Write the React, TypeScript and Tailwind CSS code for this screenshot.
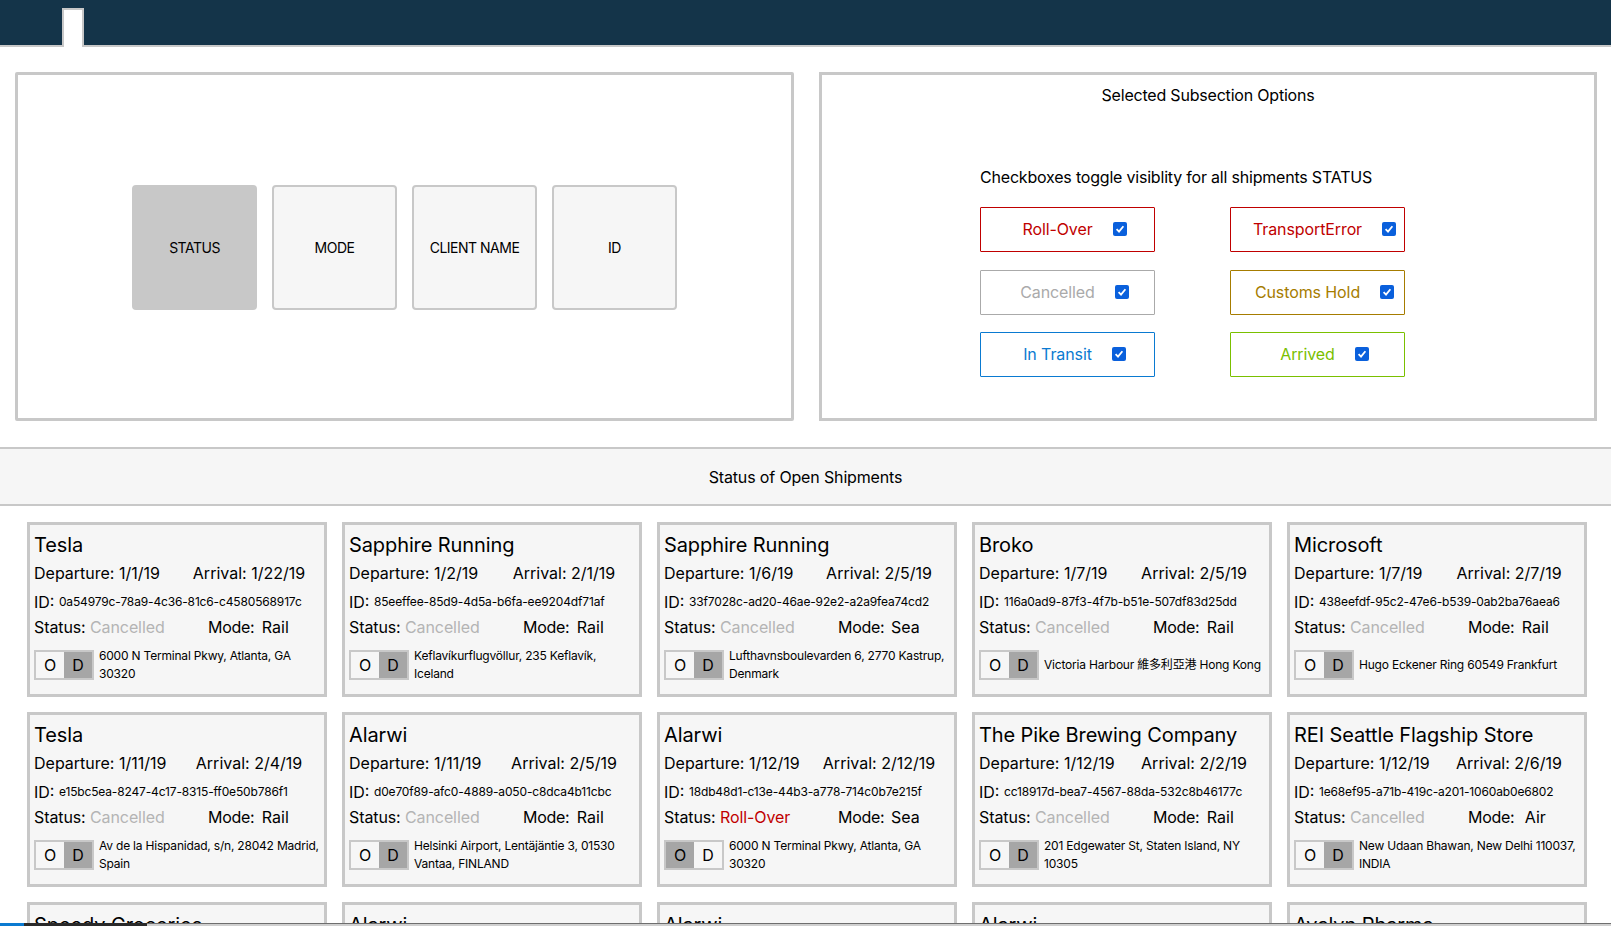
const shipments = [
  { name: "Tesla", dep: "1/1/19", arr: "1/22/19", id: "0a54979c-78a9-4c36-81c6-c4580568917c", status: "Cancelled", mode: "Rail", active: "D", addr: "6000 N Terminal Pkwy, Atlanta, GA 30320" },
  { name: "Sapphire Running", dep: "1/2/19", arr: "2/1/19", id: "85eeffee-85d9-4d5a-b6fa-ee9204df71af", status: "Cancelled", mode: "Rail", active: "D", addr: "Keflavíkurflugvöllur, 235 Keflavík, Iceland" },
  { name: "Sapphire Running", dep: "1/6/19", arr: "2/5/19", id: "33f7028c-ad20-46ae-92e2-a2a9fea74cd2", status: "Cancelled", mode: "Sea", active: "D", addr: "Lufthavnsboulevarden 6, 2770 Kastrup, Denmark" },
  { name: "Broko", dep: "1/7/19", arr: "2/5/19", id: "116a0ad9-87f3-4f7b-b51e-507df83d25dd", status: "Cancelled", mode: "Rail", active: "D", addr: "Victoria Harbour 維多利亞港 Hong Kong" },
  { name: "Microsoft", dep: "1/7/19", arr: "2/7/19", id: "438eefdf-95c2-47e6-b539-0ab2ba76aea6", status: "Cancelled", mode: "Rail", active: "D", addr: "Hugo Eckener Ring 60549 Frankfurt" },
  { name: "Tesla", dep: "1/11/19", arr: "2/4/19", id: "e15bc5ea-8247-4c17-8315-ff0e50b786f1", status: "Cancelled", mode: "Rail", active: "D", addr: "Av de la Hispanidad, s/n, 28042 Madrid, Spain" },
  { name: "Alarwi", dep: "1/11/19", arr: "2/5/19", id: "d0e70f89-afc0-4889-a050-c8dca4b11cbc", status: "Cancelled", mode: "Rail", active: "D", addr: "Helsinki Airport, Lentäjäntie 3, 01530 Vantaa, FINLAND" },
  { name: "Alarwi", dep: "1/12/19", arr: "2/12/19", id: "18db48d1-c13e-44b3-a778-714c0b7e215f", status: "Roll-Over", mode: "Sea", active: "O", addr: "6000 N Terminal Pkwy, Atlanta, GA 30320" },
  { name: "The Pike Brewing Company", dep: "1/12/19", arr: "2/2/19", id: "cc18917d-bea7-4567-88da-532c8b46177c", status: "Cancelled", mode: "Rail", active: "D", addr: "201 Edgewater St, Staten Island, NY 10305" },
  { name: "REI Seattle Flagship Store", dep: "1/12/19", arr: "2/6/19", id: "1e68ef95-a71b-419c-a201-1060ab0e6802", status: "Cancelled", mode: "Air", active: "D", addr: "New Udaan Bhawan, New Delhi 110037, INDIA" },
  { name: "Speedy Groceries", dep: "", arr: "", id: "", status: "Cancelled", mode: "Rail", active: "D", addr: "" },
  { name: "Alarwi", dep: "", arr: "", id: "", status: "Cancelled", mode: "Rail", active: "D", addr: "" },
  { name: "Alarwi", dep: "", arr: "", id: "", status: "Cancelled", mode: "Rail", active: "D", addr: "" },
  { name: "Alarwi", dep: "", arr: "", id: "", status: "Cancelled", mode: "Rail", active: "D", addr: "" },
  { name: "Avalyn Pharma", dep: "", arr: "", id: "", status: "Cancelled", mode: "Rail", active: "D", addr: "" },
]

const filters = [
  { label: "Roll-Over", cls: "border-[#c00000] text-[#c00000]" },
  { label: "TransportError", cls: "border-[#c00000] text-[#c00000]" },
  { label: "Cancelled", cls: "border-[#aaaaaa] text-[#aaaaaa]" },
  { label: "Customs Hold", cls: "border-[#a67c00] text-[#a67c00]" },
  { label: "In Transit", cls: "border-[#0a7ad1] text-[#0a7ad1]" },
  { label: "Arrived", cls: "border-[#7ac000] text-[#7ac000]" },
]

const Check = () => (
  <span className="absolute left-full top-1/2 ml-[20px] flex h-[14px] w-[14px] -translate-y-1/2 items-center justify-center rounded-[2px] bg-[#0a60dc]">
    <svg width="10" height="10" viewBox="0 0 10 10" fill="none">
      <path d="M1.6 5.2 L4 7.6 L8.4 2.2" stroke="#fff" strokeWidth="1.8" />
    </svg>
  </span>
)

const ShipmentCard = ({ s }: { s: (typeof shipments)[number] }) => (
  <div className="h-[175px] border-[3px] border-[#c8c8c8] bg-[#f6f6f6] px-[4px] pt-[6px] text-black">
    <div className="truncate text-[20px] leading-[28px] tracking-[-0.1px]">{s.name}</div>
    <div className="mt-[2px] flex text-[16px] leading-[24px]">
      <span className="w-[145px] shrink-0">Departure: {s.dep}</span>
      <span className="flex w-[140px] justify-center">Arrival: {s.arr}</span>
    </div>
    <div className="mt-[5px] flex items-center text-[16px] leading-[24px]">
      ID:&nbsp;<span className="text-[12px] tracking-[-0.15px]">{s.id}</span>
    </div>
    <div className="mt-[1px] flex text-[16px] leading-[24px]">
      <span className="w-[174px] shrink-0 tracking-[-0.1px]">
        Status: <span className={s.status === "Roll-Over" ? "text-[#c00000]" : "text-[#b4b4b4]"}>{s.status}</span>
      </span>
      <span className="tracking-[-0.3px]">Mode:</span>
      <span className="ml-[5px] w-[32px] text-center">{s.mode}</span>
    </div>
    <div className="mt-[8px] flex min-h-[36px] items-center">
      <div className="flex h-[30px] w-[60px] shrink-0 border-[2px] border-[#c8c8c8] text-[16px]">
        <span className={`flex flex-1 items-center justify-center ${s.active === "O" ? "bg-[#a6a6a6]" : ""}`}>O</span>
        <span className={`flex flex-1 items-center justify-center ${s.active === "D" ? "bg-[#a6a6a6]" : ""}`}>D</span>
      </div>
      <div className="ml-[5px] text-[12px] leading-[18px] tracking-[-0.2px]">{s.addr}</div>
    </div>
  </div>
)

export default function App() {
  return (
    <div className="relative h-[926px] overflow-hidden bg-white font-['Inter','Noto_Sans_CJK_TC',sans-serif] text-black">
      <div className="relative h-[47px] border-b-[2px] border-[#c8c8c8] bg-[#143449]">
        <div className="absolute left-[62px] top-[8px] h-[39px] w-[22px] border-x-[2px] border-t-[2px] border-[#c8c8c8] bg-white" />
      </div>

      <div className="flex gap-[25px] pl-[15px] pr-[14px] pt-[25px]">
        <div className="flex h-[349px] w-[779px] items-center justify-center rounded-[2px] border-[3px] border-[#c8c8c8] pt-[2px]">
          <div className="flex gap-[15px] text-[14px] tracking-[-0.5px]">
            {["STATUS", "MODE", "CLIENT NAME", "ID"].map((t, i) => (
              <div key={t} className={`flex h-[125px] w-[125px] items-center justify-center rounded-[4px] border-[2px] border-[#c8c8c8] ${i === 0 ? "bg-[#c8c8c8]" : "bg-[#f6f6f6]"}`}>{t}</div>
            ))}
          </div>
        </div>
        <div className="h-[349px] flex-1 border-[3px] border-[#c8c8c8]">
          <div className="pt-[8px] text-center text-[16px] leading-[24px] tracking-[-0.2px]">Selected Subsection Options</div>
          <div className="pl-[158px] pt-[58px]">
            <div className="text-[16px] leading-[24px] tracking-[-0.2px]">Checkboxes toggle visiblity for all shipments STATUS</div>
            <div className="mt-[18px] grid w-[425px] grid-cols-[175px_175px] gap-x-[75px] gap-y-[17.5px] text-[16px] tracking-[-0.1px]">
              {filters.map(f => (
                <div key={f.label} className={`flex h-[45px] items-center justify-center rounded-[1px] border pb-[1px] pr-[20px] ${f.cls}`}>
                  <span className="relative">
                    {f.label}
                    <Check />
                  </span>
                </div>
              ))}
            </div>
          </div>
        </div>
      </div>

      <div className="mt-[26px] flex h-[59px] items-center justify-center border-y-[2px] border-[#c8c8c8] bg-[#f6f6f6] text-[16px] tracking-[-0.15px]">Status of Open Shipments</div>

      <div className="grid grid-cols-5 gap-x-[15px] gap-y-[15px] pl-[27px] pr-[24px] pt-[16px]">
        {shipments.map((s, i) => <ShipmentCard key={i} s={s} />)}
      </div>

      {/* taskbar sliver at the window's bottom edge */}
      <div className="absolute inset-x-0 bottom-0 flex h-[3px]">
        <div className="w-[24px] bg-[#0a7ad1]" />
        <div className="w-[123px] bg-[#2a2a2a]" />
        <div className="flex-1 border-t border-[#6e6e6e] bg-[#d0d0d0]" />
      </div>
    </div>
  )
}
